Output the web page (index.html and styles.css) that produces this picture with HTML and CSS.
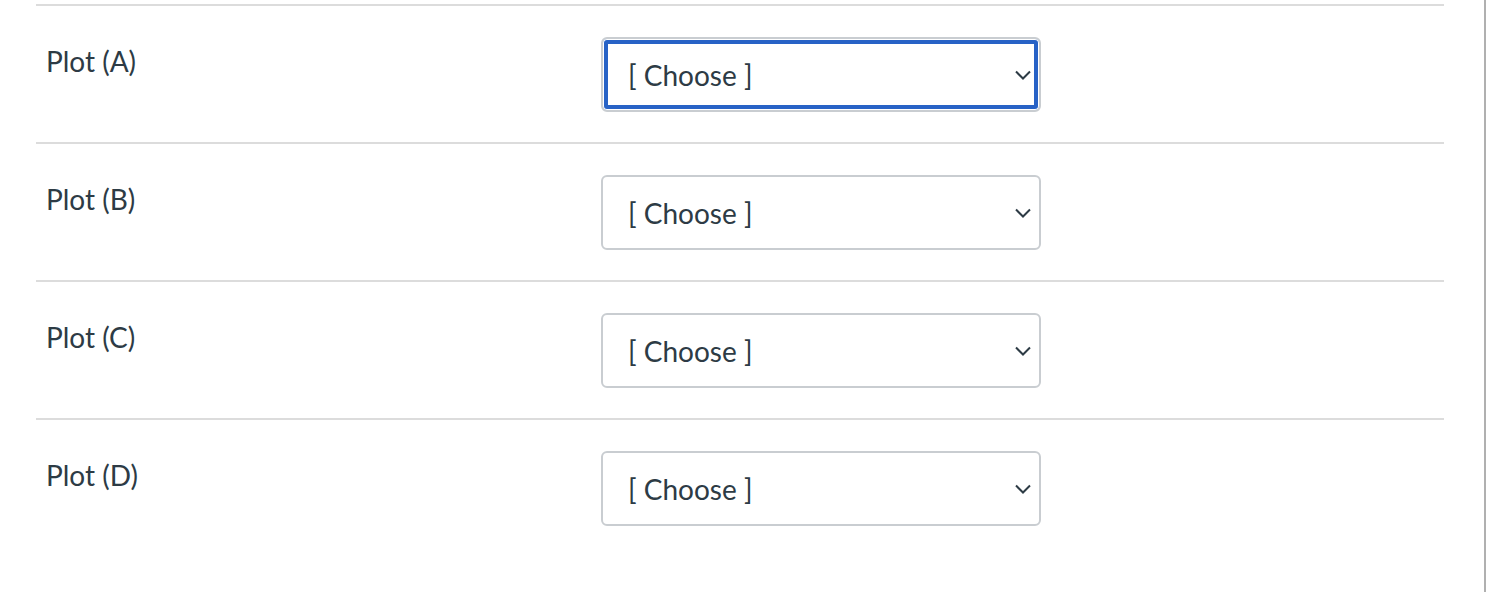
FILE: index.html
```html
<!DOCTYPE html>
<html lang="en">
<head>
<meta charset="utf-8">
<title>Matching question</title>
<link rel="stylesheet" href="styles.css">
</head>
<body>
<div class="frame">
  <div class="answers">
    <div class="row">
      <div class="label">Plot (A)</div>
      <div class="select focused">
        <span class="value">[ Choose ]</span>
        <svg class="chev" width="16" height="10" viewBox="0 0 16 10"><polyline points="1,1.5 8,8.5 15,1.5" fill="none" stroke="#2d3b45" stroke-width="2"/></svg>
      </div>
    </div>
    <div class="row">
      <div class="label">Plot (B)</div>
      <div class="select">
        <span class="value">[ Choose ]</span>
        <svg class="chev" width="16" height="10" viewBox="0 0 16 10"><polyline points="1,1.5 8,8.5 15,1.5" fill="none" stroke="#2d3b45" stroke-width="2"/></svg>
      </div>
    </div>
    <div class="row">
      <div class="label">Plot (C)</div>
      <div class="select">
        <span class="value">[ Choose ]</span>
        <svg class="chev" width="16" height="10" viewBox="0 0 16 10"><polyline points="1,1.5 8,8.5 15,1.5" fill="none" stroke="#2d3b45" stroke-width="2"/></svg>
      </div>
    </div>
    <div class="row">
      <div class="label">Plot (D)</div>
      <div class="select">
        <span class="value">[ Choose ]</span>
        <svg class="chev" width="16" height="10" viewBox="0 0 16 10"><polyline points="1,1.5 8,8.5 15,1.5" fill="none" stroke="#2d3b45" stroke-width="2"/></svg>
      </div>
    </div>
  </div>
</div>
</body>
</html>
```
FILE: styles.css
```css
html, body {
  margin: 0;
  padding: 0;
  background: #ffffff;
}
body {
  font-family: Lato, "Open Sans", sans-serif;
  color: #2d3b45;
}
.frame {
  box-sizing: border-box;
  width: 1486px;
  min-height: 592px;
  border-right: 2px solid #b0b0b0;
  padding-top: 4px;
}
.answers {
  margin-left: 36px;
  width: 1408px;
}
.row {
  display: flex;
  align-items: flex-start;
  border-top: 2px solid #dcdcdc;
  padding: 31px 0 30px 10px;
}
.label {
  width: 555px;
  font-size: 28px;
  line-height: 32px;
  padding-top: 8px;
}
.select {
  box-sizing: border-box;
  width: 440px;
  height: 75px;
  border: 2px solid #c9cdd1;
  border-radius: 6px;
  display: flex;
  align-items: center;
  justify-content: space-between;
  padding: 0 8px 0 25px;
  background: #fff;
}
.select.focused {
  box-shadow: inset 0 0 0 1px #ffffff, inset 0 0 0 5px #2762c6;
}
.value {
  font-size: 28px;
  line-height: 32px;
}
.chev {
  display: block;
}
```
